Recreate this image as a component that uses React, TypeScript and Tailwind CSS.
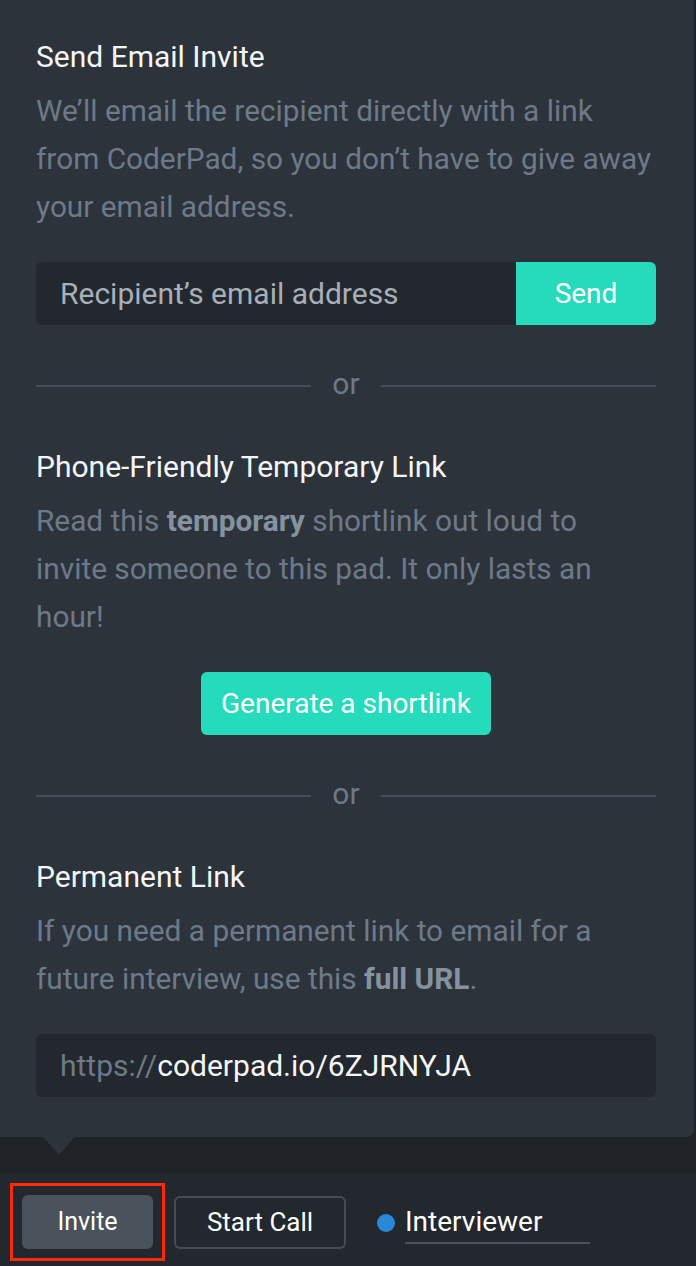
import React from 'react';

function Divider() {
    return (
        <div className="flex items-center gap-[21px] h-12 mt-[37px] mb-[33px]">
            <div className="flex-1 h-[2px] bg-[#454d57]" />
            <span className="text-[#6c7a89] text-[30px] leading-none pb-1">or</span>
            <div className="flex-1 h-[2px] bg-[#454d57]" />
        </div>
    );
}

function Section({
    title,
    children,
}: {
    title: string;
    children: React.ReactNode;
}) {
    return (
        <div>
            <h2 className="text-[#f4f6f8] text-[30px] leading-[48px]">{title}</h2>
            <p className="mt-[6px] whitespace-nowrap text-[#6c7a89] text-[29.8px] leading-[48px]">
                {children}
            </p>
        </div>
    );
}

export default function App() {
    return (
        <div
            className="w-[696px] h-[1266px] flex flex-col bg-[#1f2227] overflow-hidden"
            style={{ fontFamily: 'Roboto, "Noto Sans", sans-serif' }}
        >
            <div className="relative bg-[#2d333b] rounded-br-lg mr-[2px] pl-9 pr-[38px] pt-[33px] pb-10">
                <Section title="Send Email Invite">
                    We’ll email the recipient directly with a link
                    <br />
                    from CoderPad, so you don’t have to give away
                    <br />
                    your email address.
                </Section>

                <div className="mt-[31px] flex h-[63px] rounded-md overflow-hidden">
                    <div className="flex-1 flex items-center bg-[#23272e] px-6 text-[30px] text-[#a7afb9]">
                        Recipient’s email address
                    </div>
                    <div className="w-[140px] flex items-center justify-center bg-[#26dbbb] text-white text-[28px]">
                        Send
                    </div>
                </div>

                <Divider />

                <Section title="Phone-Friendly Temporary Link">
                    Read this <b className="font-bold text-[#8592a0]">temporary</b> shortlink
                    out loud to
                    <br />
                    invite someone to this pad. It only lasts an
                    <br />
                    hour!
                </Section>

                <div className="mt-[31px] flex justify-center">
                    <div className="h-[63px] w-[290px] flex items-center justify-center rounded-md bg-[#26dbbb] text-white text-[28px]">
                        Generate a shortlink
                    </div>
                </div>

                <Divider />

                <Section title="Permanent Link">
                    If you need a permanent link to email for a
                    <br />
                    future interview, use this{' '}
                    <b className="font-bold text-[#8592a0]">full URL</b>.
                </Section>

                <div className="mt-[31px] h-[63px] flex items-center rounded-md bg-[#23272e] px-6 text-[30px]">
                    <span className="text-[#6c7a89]">https://</span>
                    <span className="text-[#f4f6f8]">coderpad.io/6ZJRNYJA</span>
                </div>

                <div className="absolute left-[43px] -bottom-[18px] w-0 h-0 border-l-[16px] border-r-[16px] border-t-[18px] border-l-transparent border-r-transparent border-t-[#2d333b]" />
            </div>

            <div className="h-9 bg-[#1f2227]" />

            <div className="flex-1 bg-[#23272e] flex items-start pt-[10px] pl-[10px] gap-[9px]">
                <div className="border-[3px] border-[#ff2a0a] p-[9px]">
                    <div className="w-[131px] h-[54px] rounded-md bg-[#4a525c] flex items-center justify-center text-white text-[25px]">
                        Invite
                    </div>
                </div>
                <div className="mt-[13px] w-[172px] h-[53px] rounded-md border-2 border-[#454c55] flex items-center justify-center text-white text-[26px]">
                    Start Call
                </div>
                <div className="ml-[22px] mt-[13px] h-[54px] flex items-center gap-[10px]">
                    <span className="w-[18px] h-[18px] rounded-full bg-[#2a88d8]" />
                    <span className="w-[185px] text-white text-[28px] border-b-2 border-[#4a525c] leading-[40px]">
                        Interviewer
                    </span>
                </div>
            </div>
        </div>
    );
}
